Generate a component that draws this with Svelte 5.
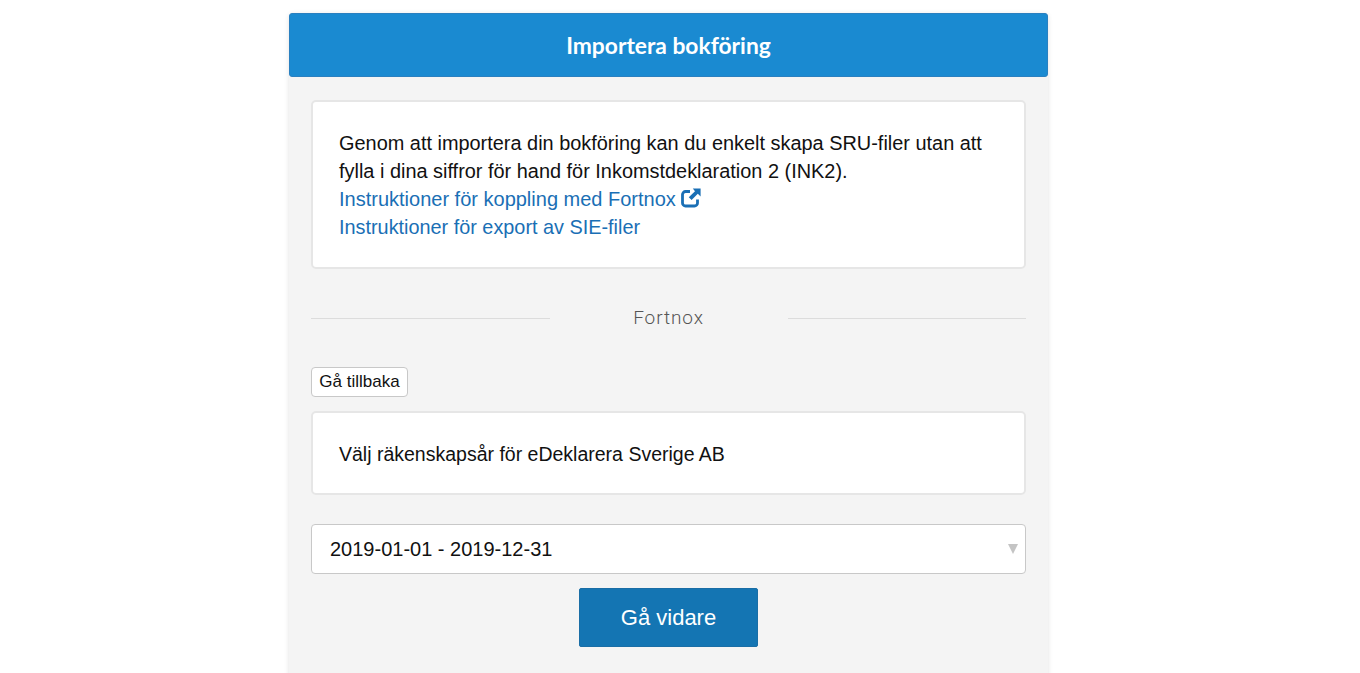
<script lang="ts">
	const years: string[] = ['2019-01-01 - 2019-12-31'];
	let year = $state(years[0]);
</script>

<div class="page">
	<main class="card">
		<header class="card-head">
			<h1>Importera bokföring</h1>
		</header>
		<div class="card-body">
			<section class="box intro">
				<p>Genom att importera din bokföring kan du enkelt skapa SRU-filer utan att fylla i dina siffror för hand för Inkomstdeklaration 2 (INK2).</p>
				<a class="ext-link" href="#fortnox">Instruktioner för koppling med Fortnox
					<svg class="ext" viewBox="0 0 20 20" width="20" height="20" aria-hidden="true">
						<path d="M16.5 11.5v3.5a3 3 0 0 1-3 3H4.5a3 3 0 0 1-3-3V6.5a3 3 0 0 1 3-3H9" fill="none" stroke="currentColor" stroke-width="2.8" />
						<path d="M11.8 0.6H19.6V8.4L16.8 5.8 10.6 12 7.8 9.2 14 3.2Z" fill="currentColor" />
					</svg>
				</a>
				<a href="#sie">Instruktioner för export av SIE-filer</a>
			</section>

			<div class="divider">
				<span class="rule"></span>
				<span class="divider-label">Fortnox</span>
				<span class="rule"></span>
			</div>

			<button class="back" type="button">Gå tillbaka</button>

			<section class="box choose">
				<p>Välj räkenskapsår för eDeklarera Sverige AB</p>
			</section>

			<div class="select-wrap">
				<select bind:value={year} aria-label="Räkenskapsår">
					{#each years as y}
						<option value={y}>{y}</option>
					{/each}
				</select>
				<span class="caret"></span>
			</div>

			<div class="actions">
				<button class="primary" type="button">Gå vidare</button>
			</div>
		</div>
	</main>
</div>

<style>
	:global(body) {
		margin: 0;
		background: #fff;
		overflow: hidden;
	}

	.page {
		height: 673px;
		overflow: hidden;
		box-sizing: border-box;
		padding: 13px 23px 0 0;
		font-family: "Liberation Sans", Arial, sans-serif;
		color: #111;
	}

	.card {
		width: 759px;
		margin: 0 auto;
		background: #f4f4f4;
		border-radius: 4px 4px 0 0;
		box-shadow: 0 1px 5px rgba(0, 0, 0, 0.12);
	}

	.card-head {
		box-sizing: border-box;
		height: 64px;
		display: flex;
		align-items: center;
		justify-content: center;
		background: #1a8ad1;
		border: 1px solid #2a80c0;
		border-radius: 3px;
	}

	h1 {
		margin: 0;
		font-family: Lato, sans-serif;
		font-size: 22.8px;
		font-weight: 700;
		color: #fff;
	}

	.card-body {
		padding: 23px 22px 30px;
	}

	.box {
		box-sizing: border-box;
		background: #fff;
		border: 2px solid #e6e6e6;
		border-radius: 5px;
		font-size: 19.85px;
		line-height: 28px;
	}

	.box p {
		margin: 0;
	}

	.intro {
		height: 169px;
		padding: 27px 26px 0;
	}

	.intro p {
		font-size: 19.92px;
	}

	.intro a {
		display: block;
		color: #1a6fb5;
		text-decoration: none;
	}

	.intro .ext-link {
		font-size: 20px;
	}

	.ext {
		vertical-align: -2px;
	}

	.divider {
		display: flex;
		align-items: center;
		gap: 0;
		height: 20px;
		margin-top: 39px;
		color: #555;
	}

	.rule {
		flex: 1;
		height: 1px;
		background: #dcdcdc;
	}

	.divider-label {
		width: 238px;
		margin-bottom: 2px;
		text-align: center;
		font-family: Roboto, sans-serif;
		font-size: 19px;
		font-weight: 300;
		letter-spacing: 0.9px;
	}

	.back {
		display: block;
		box-sizing: border-box;
		width: 97px;
		height: 30px;
		margin-top: 39px;
		padding: 0;
		background: #fff;
		border: 1.5px solid #c8c8c8;
		border-radius: 4px;
		font-family: inherit;
		font-size: 17px;
		color: #111;
	}

	.choose {
		height: 84px;
		margin-top: 14px;
		padding: 27px 26px 0;
		font-size: 19.5px;
	}

	.select-wrap {
		position: relative;
		margin-top: 29px;
	}

	select {
		display: block;
		box-sizing: border-box;
		width: 100%;
		height: 50px;
		padding: 0 18px;
		appearance: none;
		background: #fff;
		border: 1.5px solid #c8c8c8;
		border-radius: 4px;
		font-family: inherit;
		font-size: 20px;
		color: #111;
	}

	.caret {
		position: absolute;
		right: 8px;
		top: 20px;
		width: 0;
		height: 0;
		border-left: 5.5px solid transparent;
		border-right: 5.5px solid transparent;
		border-top: 10px solid #c4c4c4;
		pointer-events: none;
	}

	.actions {
		display: flex;
		justify-content: center;
		margin-top: 14px;
	}

	.primary {
		box-sizing: border-box;
		width: 179px;
		height: 59px;
		padding: 0;
		background: #1475b3;
		border: 1px solid #1a6ea6;
		border-radius: 2px;
		font-family: inherit;
		font-size: 22px;
		color: #fff;
	}
</style>
